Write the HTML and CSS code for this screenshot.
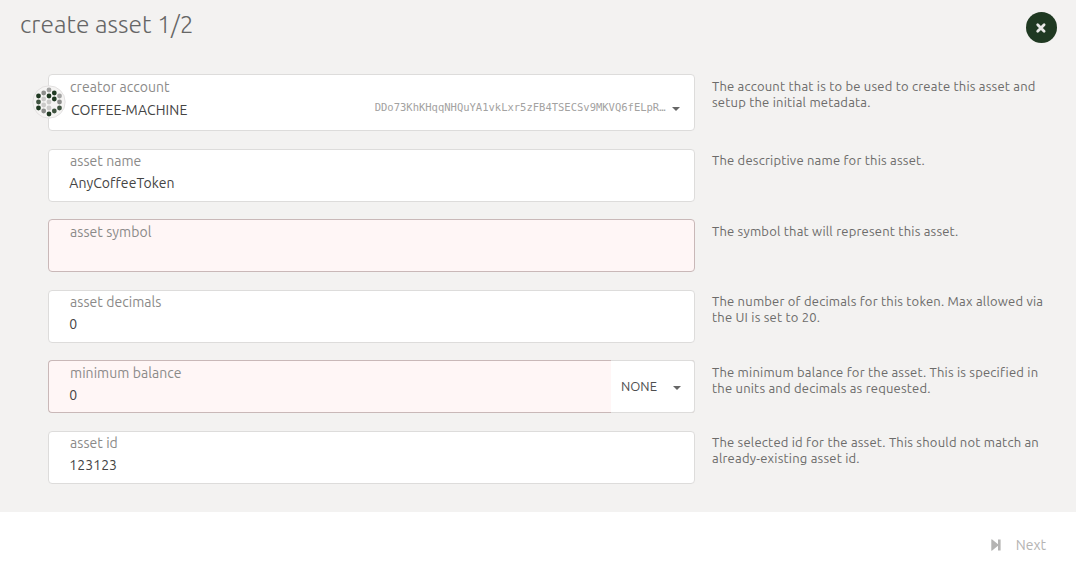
FILE: index.html
```
<!DOCTYPE html>
<html lang="en">
<head>
<meta charset="utf-8">
<title>create asset</title>
<link rel="stylesheet" href="styles.css">
</head>
<body>
<main class="modal">
  <header class="header">
    <h1 class="title">create asset 1/2</h1>
    <button class="close" aria-label="Close"><svg width="12" height="12" viewBox="0 0 12 12"><path d="M2.7 2.8 9.1 9.2M9.1 2.8 2.7 9.2"/></svg></button>
  </header>
  <section class="content">
    <div class="row">
      <div class="field account">
        <svg class="identicon" width="34" height="34" viewBox="0 0 34 34">
          <circle cx="17" cy="17" r="16.2" fill="#f5f4f3" stroke="#dddbda" stroke-width=".8"/>
          <g fill="#1f3922"><circle cx="22.3" cy="8" r="2.4"/><circle cx="17" cy="11" r="2.4"/><circle cx="22.3" cy="14" r="2.4"/><circle cx="6.5" cy="11" r="2.4"/><circle cx="6.5" cy="23" r="2.4"/><circle cx="17" cy="29" r="2.4"/></g>
          <g fill="#405441"><circle cx="6.5" cy="17" r="2.4"/><circle cx="27.5" cy="23" r="2.4"/><circle cx="22.3" cy="26" r="2.4"/></g>
          <g fill="#8c8d8b"><circle cx="11.7" cy="8" r="2.4"/><circle cx="11.7" cy="26" r="2.4"/><circle cx="27.5" cy="17" r="2.4"/></g>
          <g fill="#a3a3a2"><circle cx="17" cy="5" r="2.4"/><circle cx="27.5" cy="11" r="2.4"/></g>
          <g fill="#cbcac9"><circle cx="11.7" cy="14" r="2.4"/><circle cx="11.7" cy="20" r="2.4"/><circle cx="17" cy="17" r="2.4"/><circle cx="17" cy="23" r="2.4"/></g>
        </svg>
        <div class="entry"><span class="label">creator account</span><span class="value">COFFEE-MACHINE</span></div>
        <span class="address">DDo73KhKHqqNHQuYA1vkLxr5zFB4TSECSv9MKVQ6fELpR…</span>
        <i class="caret"></i>
      </div>
      <p class="help">The account that is to be used to create this asset and setup the initial metadata.</p>
    </div>
    <div class="row">
      <div class="field"><div class="entry"><span class="label">asset name</span><span class="value">AnyCoffeeToken</span></div></div>
      <p class="help">The descriptive name for this asset.</p>
    </div>
    <div class="row">
      <div class="field error"><div class="entry"><span class="label">asset symbol</span></div></div>
      <p class="help">The symbol that will represent this asset.</p>
    </div>
    <div class="row">
      <div class="field"><div class="entry"><span class="label">asset decimals</span><span class="value">0</span></div></div>
      <p class="help">The number of decimals for this token. Max allowed via<br>the UI is set to 20.</p>
    </div>
    <div class="row">
      <div class="field error balance">
        <div class="entry"><span class="label">minimum balance</span><span class="value">0</span></div>
        <div class="unit"><span>NONE</span><i class="caret"></i></div>
      </div>
      <p class="help">The minimum balance for the asset. This is specified in<br>the units and decimals as requested.</p>
    </div>
    <div class="row">
      <div class="field"><div class="entry"><span class="label">asset id</span><span class="value">123123</span></div></div>
      <p class="help">The selected id for the asset. This should not match an<br>already-existing asset id.</p>
    </div>
  </section>
  <footer class="footer">
    <svg width="10" height="12" viewBox="0 0 10 12"><path d="M.3.8Q.3-.2 1.2.5L7 5.2V.5H9.6V11.5H7V6.8L1.2 11.5Q.3 12.2.3 11.2Z" fill="#b5b4b3"/></svg>
    <span>Next</span>
  </footer>
</main>
</body>
</html>
```
FILE: styles.css
```
* { box-sizing: border-box; }
body { margin: 0; background: #fff; font-family: Ubuntu, "Noto Sans", sans-serif; font-size: 14px; color: #4e4e4e; }
.modal { width: 1076px; height: 575px; display: flex; flex-direction: column; overflow: hidden; }
.header { height: 74px; flex: none; display: flex; justify-content: space-between; align-items: flex-start; padding: 8px 19px 0 20px; background: #f3f2f1; }
.title { margin: 0; font-size: 24.5px; line-height: 32px; font-weight: 300; letter-spacing: .06px; color: #666; white-space: nowrap; }
.close { width: 31px; height: 31px; margin-top: 4px; border: 0; border-radius: 50%; padding: 0 1px 0 0; background: #1f3922; display: flex; align-items: center; justify-content: center; }
.close path { stroke: #e9e9e7; stroke-width: 2.8; stroke-linecap: round; }
.content { height: 438px; flex: none; display: flex; flex-direction: column; gap: 17.5px; padding-left: 48px; background: #f3f2f1; }
.row { display: flex; gap: 17px; }
.field { width: 647px; height: 53px; flex: none; display: flex; background: #fff; border: 1px solid #dddcdb; border-radius: 4px; padding-left: 21px; }
.error { background: #fff6f6; border-color: #c9b8b8; }
.account { height: 57px; position: relative; align-items: flex-start; }
.identicon { position: absolute; left: -17px; top: 10px; }
.entry { display: flex; flex-direction: column; flex: 1; align-items: flex-start; line-height: 22px; padding-top: .5px; letter-spacing: .06px; }
.account .entry { padding-top: 1px; }
.label { color: #8b8a89; white-space: nowrap; }
.value { color: #444; white-space: nowrap; margin-left: -.7px; }
.account .value { margin: 1px 0 0 1px; letter-spacing: .12px; }
.address { font: 10.5px/14px "DejaVu Sans Mono", monospace; color: #a3a2a1; margin-top: 25px; }
.caret { width: 0; height: 0; border: 4px solid transparent; border-top-color: #666; border-bottom: 0; }
.account .caret { margin: 32px 14px 0 6.5px; }
.balance { border-right-color: #dddcdb; }
.unit { width: 84px; margin: -1px -1px -1px 0; display: flex; align-items: center; justify-content: space-between; padding: 0 13.5px 2px 10px; background: #fff; border: 1px solid #dddcdb; border-left: 0; border-radius: 0 4px 4px 0; font-size: 13px; }
.unit .caret { margin-top: 4px; }
.help { width: 340px; margin: 3.9px 0 0; font-size: 13px; line-height: 16px; height: 32px; letter-spacing: .205px; color: #6c6b6a; }
.footer { flex: 1; display: flex; justify-content: flex-end; align-items: center; gap: 15px; padding: 2px 30px 0 0; color: #b5b4b3; }
```
